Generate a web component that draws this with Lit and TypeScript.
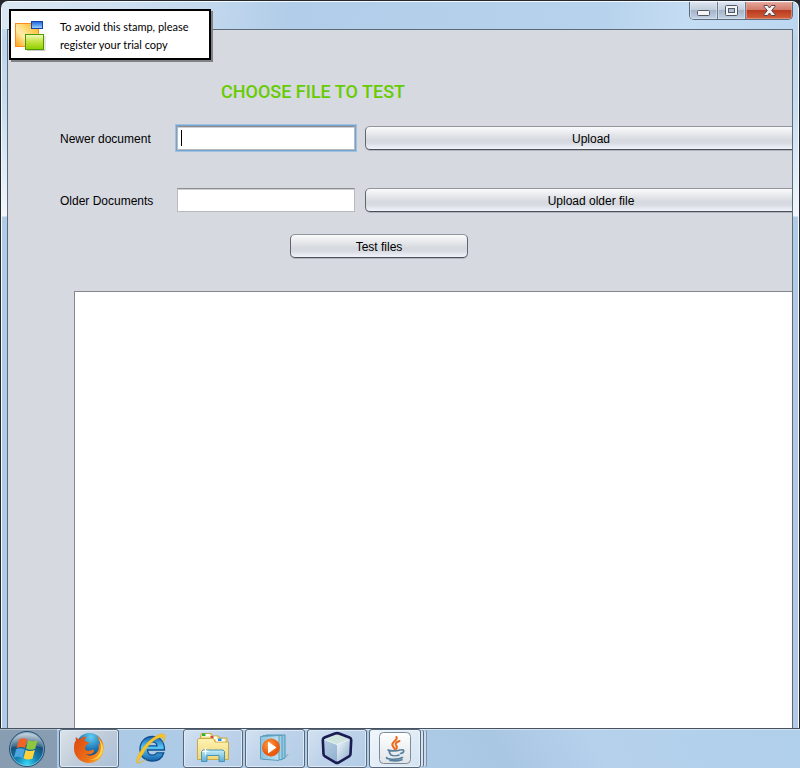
import { LitElement, html, css, svg } from "lit";
import { customElement } from "lit/decorators.js";

const stampIcon = svg`<svg width="32" height="32" viewBox="0 0 32 32" aria-hidden="true">
  <defs>
    <linearGradient id="so" x1="0" y1="1" x2="1" y2="0"><stop offset="0" stop-color="#ff9f0c"/><stop offset=".4" stop-color="#ffedaa"/><stop offset="1" stop-color="#ffb010"/></linearGradient>
    <linearGradient id="sg" x2="0" y2="1"><stop offset="0" stop-color="#f2fac0"/><stop offset=".5" stop-color="#c2e23c"/><stop offset="1" stop-color="#8ccf00"/></linearGradient>
    <linearGradient id="sb" x2="0" y2="1"><stop offset="0" stop-color="#1c62d8"/><stop offset="1" stop-color="#9fd6ff"/></linearGradient>
  </defs>
  <rect x="1.500" y="4.500" width="23" height="23" fill="url(#so)" stroke="#ff8c1a"/>
  <rect x="17.500" y="2.500" width="11" height="7" fill="url(#sb)" stroke="#1243b0"/>
  <rect x="11.500" y="15.500" width="18" height="15" fill="url(#sg)" stroke="#4c9a00"/>
  <path d="M13 31.500h18V17" fill="none" stroke="#999" stroke-opacity=".5"/>
</svg>`;

const startIcon = svg`<svg width="38" height="38" viewBox="0 0 38 38" aria-hidden="true">
  <defs>
    <radialGradient id="orb" cx=".5" cy=".92" r=".85"><stop offset="0" stop-color="#35d8f5"/><stop offset=".35" stop-color="#1583b4"/><stop offset=".75" stop-color="#174970"/><stop offset="1" stop-color="#5c7f9c"/></radialGradient>
    <linearGradient id="gloss" x2="0" y2="1"><stop offset="0" stop-color="#fff" stop-opacity=".65"/><stop offset="1" stop-color="#fff" stop-opacity=".12"/></linearGradient>
  </defs>
  <circle cx="19" cy="19" r="17.500" fill="url(#orb)" stroke="#28516f"/>
  <circle cx="19" cy="19" r="16.500" fill="none" stroke="#a4d7ec" stroke-opacity=".6"/>
  <path d="M3 18C4 8 11 3 19 3s15 5 16 15c-8-4-24-4-32 0z" fill="url(#gloss)"/>
  <path d="M11 9.500c3.200-1.700 6-1.400 8.200 0l-2.200 8.500c-2.700-1.400-5.500-1.400-8.500 0z" fill="#ef6326"/>
  <path d="M20.200 10c3 1.700 6 1.700 9.300.2l-2.300 8.500c-3.200 1.500-6.200 1.300-9.200-.3z" fill="#8dc63f"/>
  <path d="M8.200 19.200c3-1.400 5.800-1.300 8.500.2l-2.300 8.500c-2.700-1.600-5.500-1.500-8.500-.1z" fill="#4aa5e0"/>
  <path d="M17.700 19.900c3 1.600 6 1.600 9.200.1l-2.300 8.500c-3.200 1.500-6.200 1.300-9.100-.3z" fill="#ffd23c"/>
</svg>`;

const firefoxIcon = svg`<svg width="32" height="32" viewBox="0 0 32 32" aria-hidden="true">
  <defs>
    <radialGradient id="globe" cx=".55" cy=".15" r=".9"><stop offset="0" stop-color="#63cdf0"/><stop offset=".5" stop-color="#1f78b8"/><stop offset="1" stop-color="#102a5c"/></radialGradient>
    <linearGradient id="fox" x1="0" x2="1" y1=".2" y2=".8"><stop offset="0" stop-color="#dd4a12"/><stop offset=".65" stop-color="#ee7318"/><stop offset="1" stop-color="#ffb428"/></linearGradient>
  </defs>
  <circle cx="16.500" cy="14.500" r="13.500" fill="url(#globe)"/>
  <path d="M3 5c1 1.600 2.500 2.300 4.500 2.300C9 5 11 4.500 13.500 5c-1.500 1.200-2 2.600-1.800 4 .7.900 3.300.7 4.300 1.300.2 1.500-2.500 2.400-3.500 3.700.3 1.300-.5 1.800-.5 3 1.600 2.500 5 2 7 1 1.300-.6 2.500.2 2 1.500-1.500 2.700-5.500 3.500-8.500 2.300 3.500 3.500 11 1.500 13-4 .7-2.200.3-5-.7-7 1.200 1 2 2 2.300 3 .2-4-1-7.200-3.500-10 4.500 2.500 7 6.700 7 12C30.500 25 24.500 31 16 31S1 24.500 1 16.500C1 12.500 1.500 10 3 8.500 2.500 7 2.500 6 3 5z" fill="url(#fox)"/>
  <path d="M24.500 5.500c4 5 4.800 12 1.500 17-2.500 4-6 5.500-10 5 8 1.700 14-3.500 14-11 0-4-2-8-5.500-11z" fill="#ffd84a"/>
</svg>`;

const ieIcon = svg`<svg width="32" height="32" viewBox="0 0 32 32" aria-hidden="true">
  <defs><linearGradient id="ie" x2="0" y2="1"><stop offset="0" stop-color="#1667b5"/><stop offset=".45" stop-color="#58c6f2"/><stop offset="1" stop-color="#1460aa"/></linearGradient></defs>
  <path d="M29.500 18H12.500c.3 3.500 2.200 5.200 5 5.200 2.200 0 3.500-.9 4.300-2.400h7C27.300 26 23 29 17.300 29 10 29 5 24.500 5 17.200S10 4.500 17.300 4.500c7.700 0 12.200 5 12.200 13.500zM22 13.800c-.4-2.600-2-4-4.600-4s-4.300 1.400-4.900 4z" fill="url(#ie)" stroke="#124f91" stroke-width="1.300"/>
  <path d="M8 22C3 29 1.500 31.500 5 30.500c2-.6 4-1.700 6-3-6 4-10.500 5.500-9.500.5C3 20 13 8 22 3.500c5-2.500 9-2.500 8 2.500-.3 1.500-1 3-2 4.500 1-3.500.5-5.500-2.500-5C19 6.500 11.500 15 8 22z" fill="#f5c32c" stroke="#e5ae1c" stroke-width=".4"/>
</svg>`;

const explorerIcon = svg`<svg width="34" height="32" viewBox="0 0 34 32" aria-hidden="true">
  <defs>
    <linearGradient id="fold" x2="0" y2="1"><stop offset="0" stop-color="#fff3b4"/><stop offset="1" stop-color="#f0d674"/></linearGradient>
    <linearGradient id="stand" x2="0" y2="1"><stop offset="0" stop-color="#c4edf8"/><stop offset="1" stop-color="#5caed6"/></linearGradient>
  </defs>
  <path d="M4.500 10V3.500l1-2h10l1 2.500h6l1.500 2h7v6" fill="#f3dc86" stroke="#c9a94b"/>
  <path d="M6 2h8v2.500H6zM14 4.500h7V7h-7zM21 7h7v2h-7z" fill="#fff"/>
  <path d="M6 1.500h3.500V4H6z" fill="#21b62f"/>
  <path d="M14.500 4h3v2h-3z" fill="#d44a2e"/>
  <path d="M1.500 27.500V8l1-1.500h15L19 10h13.500v17.500z" fill="url(#fold)" stroke="#c9a94b"/>
  <path d="M20 9.500V7.500h9v2z" fill="#fff"/>
  <path d="M22 6.500h3.500V9H22z" fill="#268fe8"/>
  <path d="M5.500 29.500V19.500L7 18h20l1.500 1.500v10h-5.500v-6H11v6z" fill="url(#stand)" stroke="#4a93b9"/>
  <path d="M9.500 14.500l.7 4 3.800.8-3.800.7-.7 4-.7-4-3.800-.7 3.800-.8z" fill="#fff"/>
</svg>`;

const mediaIcon = svg`<svg width="32" height="30" viewBox="0 0 32 30" aria-hidden="true">
  <defs>
    <linearGradient id="film" x1="0" x2="1"><stop offset="0" stop-color="#8cc3de"/><stop offset="1" stop-color="#bfe0ef"/></linearGradient>
    <radialGradient id="play" cx=".4" cy=".35"><stop offset="0" stop-color="#ffa04a"/><stop offset="1" stop-color="#e95a0c"/></radialGradient>
  </defs>
  <path d="M24 26l6-4-2-1z" fill="#8094a8" opacity=".5"/>
  <path d="M7 2h19v23l-5 2z" fill="#8ec7df" stroke="#4f96b8"/>
  <path d="M4 2.500h19v24H4z" fill="#a3d2e6" stroke="#5a9fbf"/>
  <path d="M1.500 3.500l18.500-1v25l-18.500-1.500z" fill="url(#film)" stroke="#5a9fbf"/>
  <circle cx="12" cy="14.500" r="9" fill="url(#play)"/>
  <path d="M9 8.500l8.500 6L9 20.500z" fill="#fff"/>
</svg>`;

const cubeIcon = svg`<svg width="32" height="34" viewBox="0 0 32 34" aria-hidden="true">
  <defs>
    <linearGradient id="cl" x2="1" y2="1"><stop offset="0" stop-color="#bcd3e4"/><stop offset="1" stop-color="#7fa3cb"/></linearGradient>
    <linearGradient id="cr" x2="1" y2="1"><stop offset="0" stop-color="#f4fafd"/><stop offset="1" stop-color="#86a9c9"/></linearGradient>
    <path id="hull" d="M14 2.500q2-.8 4 0L28.500 6.500q1.700.8 1.700 2.500l-.7 14q0 1.500-1.500 2.300L17.500 31.500q-1.500.8-3 0L4 25.300q-1.500-.8-1.500-2.300L1.800 9q0-1.700 1.700-2.500z"/>
  </defs>
  <use href="#hull" fill="url(#cl)"/>
  <path d="M16 13.500L30 8l-.5 15q0 1.500-1.500 2.300L16 32z" fill="url(#cr)"/>
  <path d="M16 2l14 5.500-14 6-14-6z" fill="#cfe3df"/>
  <path d="M2 8l14 5.500L30 8" fill="none" stroke="#e9f4f8"/>
  <use href="#hull" fill="none" stroke="#1b1b54" stroke-width="2.600"/>
</svg>`;

const javaIcon = svg`<svg width="32" height="32" viewBox="0 0 32 32" aria-hidden="true">
  <defs><linearGradient id="jb" x2="0" y2="1"><stop offset="0" stop-color="#fff"/><stop offset="1" stop-color="#dfe4e8"/></linearGradient></defs>
  <rect x=".5" y=".5" width="31" height="31" rx="4" fill="url(#jb)" stroke="#7d8a97"/>
  <g fill="none" stroke="#ea6a1c" stroke-width="2" stroke-linecap="round">
    <path d="M17.500 5c2 4-7 5-3.500 9.500 1 1 1.500 1.500 1.500 2.500"/>
    <path d="M20.500 9c-4.500 1.500-4.500 3.500-3 5 .8 1 .4 2-.5 3"/>
  </g>
  <g fill="none" stroke="#557f9d" stroke-width="1.600" stroke-linecap="round">
    <path d="M9 18c2 1.200 9 1.200 12 0M22 18c4-1.200 3.500 3-.5 3.500M10 18.500c0 2 1 3 2 4.500 2 1 6 1 8 0M8 25.500c-3 1.500 10 3 15.500 0"/>
    <path d="M11 28.500c4 .6 9 .3 12-.8"/>
  </g>
</svg>`;

@customElement("app-root")
export class AppRoot extends LitElement {
  static styles = css`
    :host {
      display: flex;
      flex-direction: column;
      height: 100vh;
      overflow: hidden;
      font: 12px/16px "Liberation Sans", Arial, sans-serif;
      color: #000;
      background: #24282e;
    }
    * { box-sizing: border-box; }
    button, input, textarea { font: inherit; color: inherit; margin: 0; }
    svg { display: block; }

    .window {
      position: relative;
      flex: 1;
      min-height: 0;
      display: flex;
      flex-direction: column;
      margin: 1px 1px 0;
      padding: 0 5px;
      border: solid #f4f9fd;
      border-width: 1px 1px 0;
      border-radius: 7px 7px 0 0;
      background: linear-gradient(#d3e3f3 0, #bcd4ec 40px, #c9def1 110px, #f3f6fb 214px, #b1cbe6 215px, #b1cbe6 100%);
    }
    .titlebar {
      display: flex;
      justify-content: flex-end;
      align-items: flex-start;
      height: 27px;
      margin: 0 -5px;
      padding-right: 5px;
      border-radius: 6px 6px 0 0;
      background: linear-gradient(100deg, #dce7f3 0, #c3d9ee 25%, #b2cde9 36%, #b6d2ec 75%, #c5ddf3 86%, #bcd7f0 100%);
    }
    .controls {
      display: flex;
      height: 18px;
      border: 1px solid #5d6b80;
      border-top: 0;
      border-radius: 0 0 5px 5px;
      overflow: hidden;
    }
    .control {
      display: grid;
      place-items: center;
      width: 28px;
      padding: 2px 0 0;
      border: 0;
      border-right: 1px solid #6e7c92;
      background: linear-gradient(#dde5ef 0, #c2cedc 45%, #a5b4c9 50%, #c2d1e4 100%);
      box-shadow: inset 0 0 0 1px #e4ecf588;
    }
    .control:first-child { padding-top: 5px; }
    .maximize { padding: 0; }
    .close {
      width: 46px;
      padding: 0;
      border-right: 0;
      background: linear-gradient(#e5a599 0, #d17b6b 45%, #b93a21 50%, #d3623b 100%);
      box-shadow: inset 0 0 0 1px #f0b5a788;
    }

    .client {
      flex: 1;
      min-height: 0;
      display: flex;
      flex-direction: column;
      overflow: hidden;
      border: 1px solid #5b6c78;
      border-bottom: 0;
      background: #d6d9e0;
    }
    .title {
      margin: 50px 0 0 213px;
      font: 500 18px/24px Roboto, "Liberation Sans", cursive;
      color: #66cc00;
    }
    .row {
      display: grid;
      grid-template-columns: 107px 178px 1fr;
      column-gap: 10px;
      align-items: center;
      margin: 22px -25px 0 52px;
    }
    .row + .row { margin-top: 38px; }
    .label { padding-top: 2px; white-space: nowrap; }
    .field { position: relative; display: flex; }
    .input {
      width: 100%;
      height: 24px;
      padding: 0 6px;
      border: 1px solid #b8babd;
      border-top-color: #8d8e91;
      background: #fff;
      box-shadow: inset 0 1px 0 #cfd0d2;
      outline: 0;
    }
    .focused {
      box-shadow: inset 0 1px 0 #cfd0d2, 0 0 0 1px #73a4d1, 0 0 0 2px #a3c0dc;
      caret-color: transparent;
    }
    .caret {
      position: absolute;
      left: 4px;
      top: 4px;
      width: 1px;
      height: 16px;
      background: #000;
    }
    .button {
      height: 24px;
      padding: 2px 0 0;
      border: 1px solid #61656d;
      border-top-color: #92959c;
      border-bottom-color: #4b4f57;
      border-radius: 5px;
      background: linear-gradient(#fbfbfc 0, #e4e6ea 35%, #d5d8de 60%, #d9dce3 75%, #f1f4fb 100%);
      box-shadow: 0 1px 0 #b2b5bb;
    }
    .test { width: 178px; margin: 22px 0 0 282px; flex: none; }
    .output {
      flex: 1;
      min-height: 0;
      margin: 33px -25px 0 66px;
      border: 1px solid #83868f;
      border-bottom: 0;
      background: #fff;
      resize: none;
      outline: 0;
    }

    .stamp {
      position: absolute;
      left: 7px;
      top: 7px;
      display: flex;
      align-items: center;
      gap: 14px;
      width: 202px;
      height: 51px;
      padding-left: 3px;
      border: 2px solid #000;
      background: #fff;
      box-shadow: 2px 2px 0 #7f8287;
      font: 11px/18px Lato, "Liberation Sans", sans-serif;
      white-space: nowrap;
    }
    .stamp p { margin: 0; padding-top: 3px; }

    .taskbar {
      flex: none;
      display: flex;
      gap: 2px;
      height: 40px;
      border-top: 1px solid #46525f;
      box-shadow: inset 0 1px 0 #d5e3f1;
      background: linear-gradient(60deg, #a6c3e0 0, #b2cfea 38%, #a9c6e3 62%, #b5d1ec 74%, #b0cfeb 100%);
    }
    .start, .task {
      display: grid;
      place-items: center;
      padding: 0;
      border: 0;
      background: none;
    }
    .start {
      width: 57px;
      padding-right: 3px;
      background: #899db2;
      box-shadow: inset 0 1px 0 #aebdcc;
    }
    .task { width: 60px; padding-bottom: 2px; }
    .open {
      border: 1px solid #576678;
      border-radius: 3px;
      background: linear-gradient(135deg, #d3e2f2 0, #bed3ea 45%, #b3cce6 100%);
      box-shadow: inset 0 0 0 1px #ddeaf6;
    }
    .hot { background: linear-gradient(135deg, #dce3ea 0, #c0ccda 50%, #a9bfd7 100%); }
    .stack {
      width: 52px;
      background: linear-gradient(135deg, #f0f6fb 0, #d4e3f2 100%);
      box-shadow: inset 0 0 0 1px #eaf2fa, 3px 0 0 -1px #d5e4f2, 4px 0 0 -1px #5d6c7e, 6px 0 0 -1px #c9dbed, 7px 0 0 -1px #8193a8;
    }
  `;

  render() {
    return html`
      <main class="window">
        <header class="titlebar">
          <div class="controls">
            <button class="control" aria-label="Minimize">
              <svg width="13" height="6" viewBox="0 0 13 6"><rect x=".5" y=".5" width="12" height="5" rx="1" fill="#f5f5f5" stroke="#515866"/></svg>
            </button>
            <button class="control maximize" aria-label="Maximize">
              <svg width="13" height="11" viewBox="0 0 13 11"><rect x=".5" y=".5" width="12" height="10" rx="1" fill="#f5f5f5" stroke="#515866"/><rect x="3.500" y="3.500" width="6" height="4" fill="#aebccd" stroke="#515866"/></svg>
            </button>
            <button class="control close" aria-label="Close">
              <svg width="13" height="11" viewBox="0 0 13 11"><path d="M1 .5h3.500l2 2.500 2-2.500H12v1L8.700 5.500 12 9.500v1H8.500l-2-2.500-2 2.500H1v-1l3.300-4L1 1.500z" fill="#f7f3f2" stroke="#594550"/></svg>
            </button>
          </div>
        </header>
        <section class="client">
          <h1 class="title">CHOOSE FILE TO TEST</h1>
          <div class="row">
            <label class="label" for="newer">Newer document</label>
            <div class="field">
              <input class="input focused" id="newer" type="text" />
              <span class="caret"></span>
            </div>
            <button class="button">Upload</button>
          </div>
          <div class="row">
            <label class="label" for="older">Older Documents</label>
            <div class="field"><input class="input" id="older" type="text" /></div>
            <button class="button">Upload older file</button>
          </div>
          <button class="button test">Test files</button>
          <textarea class="output" aria-label="Results"></textarea>
        </section>
        <aside class="stamp">
          ${stampIcon}
          <p>To avoid this stamp, please<br />register your trial copy</p>
        </aside>
      </main>
      <nav class="taskbar">
        <button class="start" aria-label="Start">${startIcon}</button>
        <button class="task open hot" aria-label="Firefox">${firefoxIcon}</button>
        <button class="task" aria-label="Internet Explorer">${ieIcon}</button>
        <button class="task open" aria-label="Windows Explorer">${explorerIcon}</button>
        <button class="task open" aria-label="Media Player">${mediaIcon}</button>
        <button class="task open" aria-label="NetBeans">${cubeIcon}</button>
        <button class="task open stack" aria-label="Java">${javaIcon}</button>
      </nav>
    `;
  }
}
